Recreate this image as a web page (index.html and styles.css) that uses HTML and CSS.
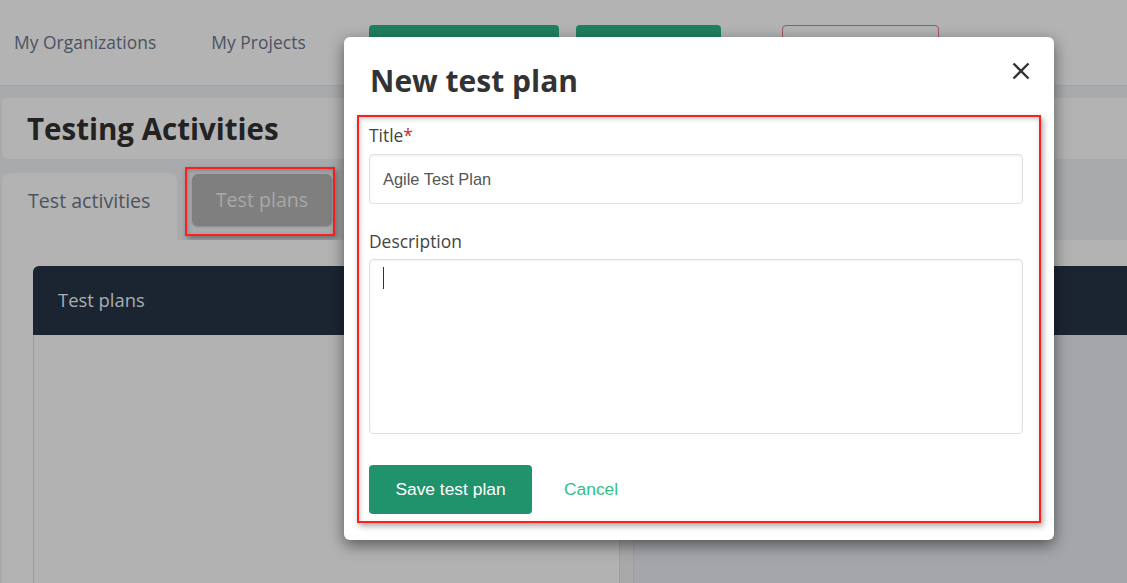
FILE: index.html
```html
<!DOCTYPE html>
<html lang="en">
<head>
	<meta charset="UTF-8">
	<title>Testing Activities</title>
	<link rel="stylesheet" href="styles.css">
</head>
<body>
	<div class="page">
		<header class="topbar">
			<a class="nav-link">My Organizations</a>
			<a class="nav-link projects">My Projects</a>
			<span class="btn-top green wide"></span>
			<span class="btn-top green"></span>
			<span class="btn-top outline"></span>
		</header>

		<div class="main">
			<div class="page-title">
				<h1>Testing Activities</h1>
			</div>

			<div class="tabs">
				<div class="tab active">Test activities</div>
				<div class="mark tab-mark">
					<div class="tab-btn">Test plans</div>
				</div>
			</div>

			<div class="tab-body">
				<section class="panel left">
					<div class="panel-head">Test plans</div>
					<div class="panel-body"></div>
				</section>
				<div class="splitter"></div>
				<section class="panel right">
					<div class="panel-head"></div>
					<div class="panel-body"></div>
				</section>
			</div>
		</div>
	</div>

	<!-- dialog -->
	<div class="modal">
		<div class="modal-head">
			<h2>New test plan</h2>
			<span class="close">
				<svg width="18" height="18" viewBox="0 0 18 18">
					<path d="M1.5 1.5 L16.5 16.5 M16.5 1.5 L1.5 16.5" stroke="#333" stroke-width="2.4" fill="none"/>
				</svg>
			</span>
		</div>
		<div class="mark form-mark">
			<label class="label">Title<span class="req">*</span></label>
			<div class="input">Agile Test Plan</div>

			<label class="label desc">Description</label>
			<div class="textarea"><span class="caret"></span></div>

			<div class="actions">
				<span class="btn-save">Save test plan</span>
				<span class="btn-cancel">Cancel</span>
			</div>
		</div>
	</div>
</body>
</html>
```

FILE: styles.css
```css
*{padding: 0;margin: 0;box-sizing: border-box;}
html, body{
	height: 100%;
	overflow: hidden;
}
body{
	font-family: "Open Sans", "Liberation Sans", sans-serif;
	font-size: 17.4px;
	background-color: #a9aaac;
	position: relative;
}
.page{
	height: 100%;
	display: flex;
	flex-direction: column;
}

/* top bar */
.topbar{
	height: 86px;
	flex-shrink: 0;
	display: flex;
	align-items: center;
	padding-left: 14px;
	background-color: #b3b3b3;
	border-bottom: 1px solid #a3a3a3;
}
.nav-link{
	color: #4b5263;
	padding-bottom: 1px;
	letter-spacing: 0.05px;
}
.nav-link.projects{
	margin-left: 55px;
}
.btn-top{
	display: block;
	align-self: flex-start;
	height: 36px;
	margin-top: 25px;
	border-radius: 4px;
}
.btn-top.green{
	background-color: #1f805f;
	width: 145px;
	margin-left: 17px;
}
.btn-top.green.wide{
	width: 190px;
	margin-left: 63px;
}
.btn-top.outline{
	width: 157px;
	margin-left: 61px;
	border: 1px solid #a35656;
}

/* main */
.main{
	flex: 1;
	display: flex;
	flex-direction: column;
	padding: 12px 0 0 2px;
}
.page-title{
	height: 61px;
	display: flex;
	align-items: center;
	padding-left: 25px;
	background-color: #b3b3b3;
	border-radius: 6px 0 0 6px;
}
.page-title h1{
	font-size: 29.5px;
	font-weight: 700;
	color: #222;
}

.tabs{
	display: flex;
	align-items: flex-start;
	margin-top: 8px;
	height: 73px;
}
.tab{
	width: 175px;
	height: 67px;
	margin-top: 6px;
	padding: 14px 0 0 26px;
	font-size: 19.6px;
	color: #4d5260;
	background-color: #b3b3b3;
	border-radius: 8px 8px 0 0;
}
.mark{
	border: 2px solid #ff1f1f;
	box-shadow: 2px 3px 6px rgba(0,0,0,.35), inset 1px 2px 5px rgba(0,0,0,.2);
}
.tab-mark{
	margin-left: 8px;
	padding: 5px 1px 8px 5px;
}
.tab-btn{
	width: 140px;
	height: 52px;
	line-height: 52px;
	text-align: center;
	font-size: 19.6px;
	color: #a8a8a8;
	background-color: #7f7f7f;
	border-radius: 6px;
	box-shadow: 0 1px 2px rgba(0,0,0,.2);
}

.tab-body{
	flex: 1;
	display: flex;
	padding: 26px 0 0 31px;
	background-color: #b3b3b3;
}
.panel{
	display: flex;
	flex-direction: column;
}
.panel.left{
	width: 587px;
}
.panel.right{
	flex: 1;
}
.panel-head{
	height: 69px;
	flex-shrink: 0;
	padding: 21px 0 0 25px;
	font-size: 18.4px;
	color: #a9aeb4;
	background-color: #1b2532;
}
.panel.left .panel-head{
	border-radius: 6px 6px 0 0;
}
.panel-body{
	flex: 1;
}
.panel.left .panel-body{
	background-color: #b2b2b2;
	border-left: 1px solid #9e9e9e;
	border-right: 1px solid #9e9e9e;
}
.panel.right .panel-body{
	background-color: #a5a6aa;
	border-left: 1px solid #9e9e9e;
}
.splitter{
	width: 13px;
	margin-top: 69px;
	background-color: #a9a9a9;
}

/* modal */
.modal{
	position: absolute;
	left: 344px;
	top: 37px;
	width: 710px;
	height: 503px;
	padding: 23px 13px 17px 13px;
	background-color: #fff;
	border-radius: 6px;
	box-shadow: 0 5px 15px rgba(0,0,0,.5);
}
.modal-head{
	display: flex;
	justify-content: space-between;
	align-items: flex-start;
	padding: 0 11px 0 13px;
}
.modal-head h2{
	font-size: 30px;
	font-weight: 700;
	color: #333;
}
.close{
	display: block;
	width: 18px;
	height: 18px;
	margin-top: 2px;
}
.close svg{
	display: block;
}

.form-mark{
	margin-top: 14px;
	height: 408px;
	padding: 6px 16px 0 10px;
}
.label{
	display: block;
	color: #444;
	line-height: 24px;
}
.label .req{
	color: #c9302c;
}
.label.desc{
	margin-top: 25px;
}
.input{
	height: 50px;
	margin-top: 7px;
	padding: 0 13px;
	line-height: 48px;
	font-family: "Liberation Sans", Arial, sans-serif;
	font-size: 16.4px;
	color: #555;
	border: 1px solid #e0e0e0;
	border-radius: 4px;
	box-shadow: inset 0 1px 2px rgba(0,0,0,.07);
}
.textarea{
	height: 175px;
	margin-top: 6px;
	padding: 7px 13px;
	border: 1px solid #e0e0e0;
	border-radius: 4px;
	box-shadow: inset 0 1px 2px rgba(0,0,0,.07);
}
.caret{
	display: block;
	width: 1px;
	height: 22px;
	background-color: #333;
}

.actions{
	display: flex;
	align-items: center;
	margin-top: 31px;
	font-family: "Liberation Sans", Arial, sans-serif;
	font-size: 17.4px;
}
.btn-save{
	display: block;
	width: 163px;
	height: 49px;
	line-height: 49px;
	text-align: center;
	color: #fff;
	background-color: #21936c;
	border-radius: 4px;
}
.btn-cancel{
	margin-left: 32px;
	color: #32c088;
}
```
